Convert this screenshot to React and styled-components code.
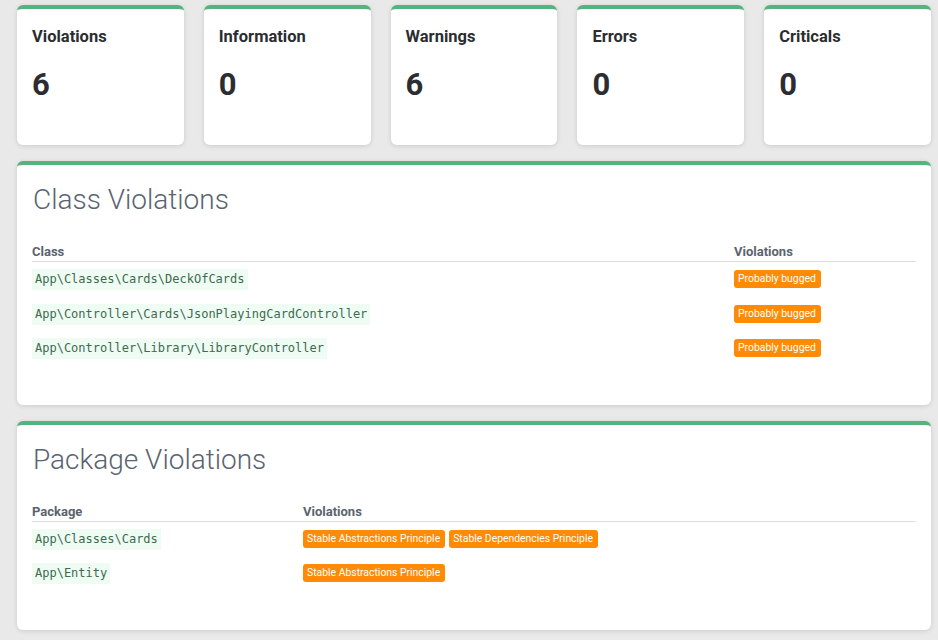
import React from "react";
import styled, { createGlobalStyle } from "styled-components";

const GlobalStyle = createGlobalStyle`
  html, body {
    margin: 0;
    padding: 0;
    background: #e9e9e9;
    font-family: Roboto, "Liberation Sans", sans-serif;
  }
`;

const GREEN = "#55b47b";
const ORANGE = "#fd8b05";

const Page = styled.div`
  padding: 5px 7px 9px 17px;
  display: flex;
  flex-direction: column;
  gap: 16px;
`;

const StatGrid = styled.div`
  display: grid;
  grid-template-columns: repeat(5, 1fr);
  gap: 20px;
`;

const StatCard = styled.div`
  box-sizing: border-box;
  height: 140px;
  background: #fff;
  border-top: 4px solid ${GREEN};
  border-radius: 6px;
  box-shadow: 0 1px 5px rgba(0, 0, 0, 0.13);
  padding: 18px 15px;
  display: flex;
  flex-direction: column;
  gap: 19px;
`;

const StatTitle = styled.div`
  font-size: 16.5px;
  font-weight: 700;
  line-height: 1.2;
  color: #2b2d31;
`;

const StatValue = styled.div`
  font-size: 31px;
  font-weight: 700;
  line-height: 1.2;
  color: #2b2d31;
`;

const Panel = styled.section`
  box-sizing: border-box;
  background: #fff;
  border-top: 4px solid ${GREEN};
  border-radius: 6px;
  box-shadow: 0 1px 5px rgba(0, 0, 0, 0.13);
  padding: 17px 15px 39px;
`;

const PanelTitle = styled.h2`
  margin: 0 0 25px 1px;
  font-size: 28px;
  font-weight: 300;
  line-height: 36px;
  color: #5a6370;
`;

const Table = styled.table`
  width: 100%;
  border-collapse: collapse;
  table-layout: fixed;
`;

const HeadCell = styled.th`
  text-align: left;
  font-size: 13px;
  font-weight: 700;
  line-height: 18px;
  color: #5b636e;
  padding: 0;
  border-bottom: 1px solid #dcdcdc;
  width: ${(p) => p.$width || "auto"};
`;

const Cell = styled.td`
  height: 34.5px;
  padding: 0;
  vertical-align: middle;
`;

const Code = styled.code`
  display: inline-block;
  font-family: "DejaVu Sans Mono", "Liberation Mono", monospace;
  font-size: 12px;
  line-height: 15px;
  padding: 3px;
  background: #effcf3;
  color: #3e6a50;
`;

const BadgeRow = styled.div`
  display: flex;
  gap: 4px;
`;

const Badge = styled.span`
  display: inline-block;
  background: ${ORANGE};
  color: #fff;
  font-family: Roboto, "Liberation Sans", sans-serif;
  font-size: 10.4px;
  font-weight: 400;
  line-height: 14px;
  padding: 2px 5px 2px 4px;
  border-radius: 3px;
`;

const stats = [
  ["Violations", 6],
  ["Information", 0],
  ["Warnings", 6],
  ["Errors", 0],
  ["Criticals", 0],
];

const classRows = [
  ["App\\Classes\\Cards\\DeckOfCards", ["Probably bugged"]],
  ["App\\Controller\\Cards\\JsonPlayingCardController", ["Probably bugged"]],
  ["App\\Controller\\Library\\LibraryController", ["Probably bugged"]],
];

const packageRows = [
  ["App\\Classes\\Cards", ["Stable Abstractions Principle", "Stable Dependencies Principle"]],
  ["App\\Entity", ["Stable Abstractions Principle"]],
];

function ViolationTable({ title, firstHead, firstWidth, rows }) {
  return (
    <Panel>
      <PanelTitle>{title}</PanelTitle>
      <Table>
        <thead>
          <tr>
            <HeadCell $width={firstWidth}>{firstHead}</HeadCell>
            <HeadCell>Violations</HeadCell>
          </tr>
        </thead>
        <tbody>
          {rows.map(([name, badges]) => (
            <tr key={name}>
              <Cell>
                <Code>{name}</Code>
              </Cell>
              <Cell>
                <BadgeRow>
                  {badges.map((b) => (
                    <Badge key={b}>{b}</Badge>
                  ))}
                </BadgeRow>
              </Cell>
            </tr>
          ))}
        </tbody>
      </Table>
    </Panel>
  );
}

export default function App() {
  return (
    <>
      <GlobalStyle />
      <Page>
        <StatGrid>
          {stats.map(([label, value]) => (
            <StatCard key={label}>
              <StatTitle>{label}</StatTitle>
              <StatValue>{value}</StatValue>
            </StatCard>
          ))}
        </StatGrid>
        <ViolationTable
          title="Class Violations"
          firstHead="Class"
          firstWidth="702px"
          rows={classRows}
        />
        <ViolationTable
          title="Package Violations"
          firstHead="Package"
          firstWidth="271px"
          rows={packageRows}
        />
      </Page>
    </>
  );
}
